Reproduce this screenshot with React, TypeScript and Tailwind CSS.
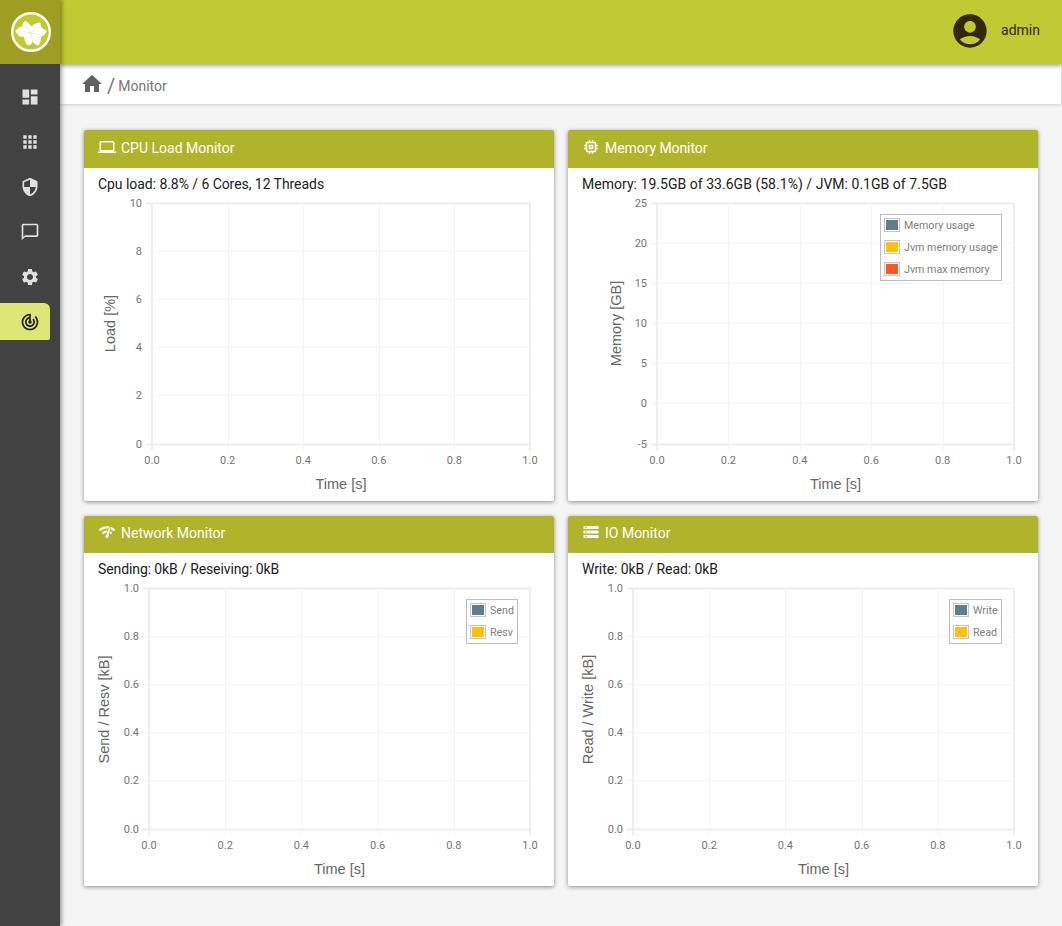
import type { ReactNode } from "react";
import {
  MdAccountCircle,
  MdApps,
  MdChatBubbleOutline,
  MdDashboard,
  MdHome,
  MdLaptop,
  MdMemory,
  MdNetworkCheck,
  MdSecurity,
  MdSettings,
  MdStorage,
  MdTrackChanges,
} from "react-icons/md";

type TLegend = { label: string; color: string };

type TChart = {
  left: number;
  right: number;
  yLabels: string[];
  yTitle: string;
  yTitleX: number;
  yTitleMid?: number;
  legend?: TLegend[];
  legendW?: number;
};

const xLabels = ["0.0", "0.2", "0.4", "0.6", "0.8", "1.0"];

// chart drawing, coordinates are relative to the svg (470 x 305)
const Chart = ({ left, right, yLabels, yTitle, yTitleX, yTitleMid = 127.5, legend, legendW = 0 }: TChart) => {
  const top = 7.5;
  const bottom = 248.5;
  const stepY = (bottom - top) / (yLabels.length - 1);
  const stepX = (right - left) / 5;
  const legendX = right - 12 - legendW - 0.5;
  return (
    <svg width="470" height="305" className="block">
      {yLabels.map((label, i) => {
        const edge = i === 0 || i === yLabels.length - 1;
        const y = edge ? top + stepY * i : Math.round(top + stepY * i) - 0.5;
        return (
          <g key={label}>
            <line
              x1={left - 6}
              x2={right}
              y1={y}
              y2={y}
              stroke={edge ? "#eeeeee" : "#f3f3f3"}
              strokeWidth={edge ? 2 : 1}
            />
            <text x={left - 10} y={top + stepY * i + 3} textAnchor="end" fontSize="11" fill="#757575" fontFamily="Roboto, sans-serif">
              {label}
            </text>
          </g>
        );
      })}
      {xLabels.map((label, i) => {
        const edge = i === 0 || i === 5;
        const x = edge ? left + stepX * i : Math.round(left + stepX * i) + 0.5;
        return (
          <g key={label}>
            <line
              x1={x}
              x2={x}
              y1={top - 1}
              y2={bottom + 6}
              stroke={edge ? "#eeeeee" : "#f3f3f3"}
              strokeWidth={edge ? 2 : 1}
            />
            <text x={left + stepX * i} y={bottom + 19} textAnchor="middle" fontSize="11" fill="#757575" fontFamily="Roboto, sans-serif">
              {label}
            </text>
          </g>
        );
      })}
      <text
        x={(left + right) / 2}
        y={293}
        textAnchor="middle"
        fontSize="14.5"
        fill="#666"
        fontFamily="'Liberation Sans', sans-serif"
      >
        Time [s]
      </text>
      <text
        transform={`translate(${yTitleX} ${yTitleMid}) rotate(-90)`}
        textAnchor="middle"
        fontSize="14.5"
        fill="#666"
        fontFamily="'Liberation Sans', sans-serif"
      >
        {yTitle}
      </text>
      {legend && (
        <g>
          <rect
            x={legendX}
            y={18.5}
            width={legendW}
            height={legend.length * 22}
            fill="#fff"
            stroke="#bdbdbd"
          />
          {legend.map((item, i) => (
            <g key={item.label}>
              <rect x={legendX + 4} y={22.5 + i * 22} width={15} height={13} fill="#fff" stroke="#c4c4c4" />
              <rect x={legendX + 5.5} y={24 + i * 22} width={12} height={10} fill={item.color} />
              <text
                x={legendX + 23.5}
                y={33 + i * 22}
                fontSize="10.7"
                fill="#808080"
                fontFamily="Roboto, sans-serif"
              >
                {item.label}
              </text>
            </g>
          ))}
        </g>
      )}
    </svg>
  );
};

type TCard = {
  icon: ReactNode;
  title: string;
  titleClass?: string;
  status: string;
  statusClass: string;
  bottomRow?: boolean;
  chart: TChart;
};

const Card = ({ icon, title, titleClass, status, statusClass, bottomRow, chart }: TCard) => {
  return (
    <div
      className={
        bottomRow
          ? "bg-white rounded-[2px] shadow-[0_1px_4px_rgba(0,0,0,0.45)] h-[370px] overflow-hidden"
          : "bg-white rounded-[2px] shadow-[0_1px_4px_rgba(0,0,0,0.45)] h-[371px] overflow-hidden"
      }
    >
      <div
        className={
          bottomRow
            ? "h-[37px] pb-[4px] bg-[#afb42b] text-white text-sm flex items-center gap-[5px] pl-[14px]"
            : "h-[38px] pb-[2px] bg-[#afb42b] text-white text-sm flex items-center gap-[5px] pl-[14px]"
        }
      >
        <span className="mb-[2px]">{icon}</span>
        <span className={titleClass}>{title}</span>
      </div>
      <div className={"h-[28px] pl-[14px] pt-[6px] text-sm leading-[20px] text-[#212121] " + statusClass}>
        {status}
      </div>
      <Chart {...chart} />
    </div>
  );
};

const Logo = () => {
  return (
    <svg width="42" height="42" viewBox="0 0 42 42">
      <circle cx="21" cy="21" r="18.8" fill="#c0ca33" stroke="#fff" strokeWidth="2.4" />
      <path
        d="M5.7 20L9 16.5L12.5 15.5L13.5 12L15 10L18 12L21.5 15.5L25 13L30 11.7L30.5 15L32 17.5L36.7 20L34 24L31 25.5L30 31L28.3 34.3L25 33L22.7 30.5L20 34L16.7 33.3L15 29L14 25.5L9 25Z"
        fill="#fff"
        stroke="#fff"
        strokeWidth="0.6"
        strokeLinejoin="round"
      />
      <path
        d="M9 20L21 22L30 15M15 13L21 22L22.5 31M21 22L31 24M21 22L15 29"
        fill="none"
        stroke="#e6e8c8"
        strokeWidth="0.7"
      />
    </svg>
  );
};

const navIcons = [
  <MdDashboard key="dashboard" size={20} />,
  <MdApps key="apps" size={20} />,
  <MdSecurity key="security" size={20} />,
  <MdChatBubbleOutline key="chat" size={20} />,
  <MdSettings key="settings" size={20} />,
];

const legend3 = [
  { label: "Memory usage", color: "#607d8b" },
  { label: "Jvm memory usage", color: "#ffc107" },
  { label: "Jvm max memory", color: "#ff5722" },
];

const zeroToOne = ["1.0", "0.8", "0.6", "0.4", "0.2", "0.0"];

const App = () => {
  return (
    <div className="flex min-h-screen bg-[#f5f5f5] text-[#212121] font-['Roboto',sans-serif]">
      <aside className="w-[60px] shrink-0 bg-[#424242] relative z-20 shadow-[2px_0_4px_rgba(0,0,0,0.35)]">
        <div className="h-[64px] bg-[#9e9d24] flex items-center justify-center pl-[2px]">
          <Logo />
        </div>
        <nav className="pt-[10px] text-[#e0e0e0]">
          {navIcons.map((icon, i) => (
            <div key={i} className="h-[45px] flex items-center justify-center">
              {icon}
            </div>
          ))}
          <div className="w-[50px] h-[37px] mt-[4px] bg-[#dce775] rounded-tr-[6px] rounded-br-[2px] flex items-center justify-end pr-[10px] text-[#212121]">
            <MdTrackChanges size={20} />
          </div>
        </nav>
      </aside>
      <div className="flex-1 min-w-0">
        <header className="h-[64px] bg-[#c0ca33] flex items-center justify-end pr-[22px] relative z-10 shadow-[0_2px_4px_rgba(0,0,0,0.35)]">
          <MdAccountCircle size={40} className="text-[#33290a] mb-[2px]" />
          <span className="ml-[11px] text-sm text-[#33290a] mb-[4px]">admin</span>
        </header>
        <div className="h-[40px] mr-[1px] bg-white flex items-center pl-[20px] shadow-[0_0_4px_rgba(0,0,0,0.25)]">
          <MdHome size={24} className="text-[#616161]" />
          <span className="ml-[3px] text-[#757575] text-[20px] leading-none mt-[4px]">/</span>
          <span className="ml-[3px] text-[#757575] text-sm mt-[4px]">Monitor</span>
        </div>
        <main className="px-[24px] pt-[26px] pb-[40px] grid grid-cols-2 gap-x-[14px] gap-y-[15px]">
          <Card
            icon={<MdLaptop size={18} />}
            title="CPU Load Monitor"
            status="Cpu load: 8.8% / 6 Cores, 12 Threads"
            statusClass="tracking-[-0.055px]"
            chart={{
              left: 68,
              right: 446,
              yLabels: ["10", "8", "6", "4", "2", "0"],
              yTitle: "Load [%]",
              yTitleX: 31,
            }}
          />
          <Card
            icon={<MdMemory size={18} />}
            title="Memory Monitor"
            titleClass="tracking-[-0.07px]"
            status="Memory: 19.5GB of 33.6GB (58.1%) / JVM: 0.1GB of 7.5GB"
            statusClass="tracking-[0.03px]"
            chart={{
              left: 89,
              right: 446,
              yLabels: ["25", "20", "15", "10", "5", "0", "-5"],
              yTitle: "Memory [GB]",
              yTitleX: 53,
              legend: legend3,
              legendW: 121,
            }}
          />
          <Card
            bottomRow
            icon={<MdNetworkCheck size={18} />}
            title="Network Monitor"
            status="Sending: 0kB / Reseiving: 0kB"
            statusClass="tracking-[-0.1px]"
            chart={{
              left: 65,
              right: 446,
              yLabels: zeroToOne,
              yTitle: "Send / Resv [kB]",
              yTitleX: 25,
              yTitleMid: 128.5,
              legend: [
                { label: "Send", color: "#607d8b" },
                { label: "Resv", color: "#ffc107" },
              ],
              legendW: 51,
            }}
          />
          <Card
            bottomRow
            icon={<MdStorage size={18} />}
            title="IO Monitor"
            status="Write: 0kB / Read: 0kB"
            statusClass="tracking-[-0.09px]"
            chart={{
              left: 65,
              right: 446,
              yLabels: zeroToOne,
              yTitle: "Read / Write [kB]",
              yTitleX: 25,
              yTitleMid: 128.5,
              legend: [
                { label: "Write", color: "#607d8b" },
                { label: "Read", color: "#ffc107" },
              ],
              legendW: 52,
            }}
          />
        </main>
      </div>
    </div>
  );
};

export default App;
